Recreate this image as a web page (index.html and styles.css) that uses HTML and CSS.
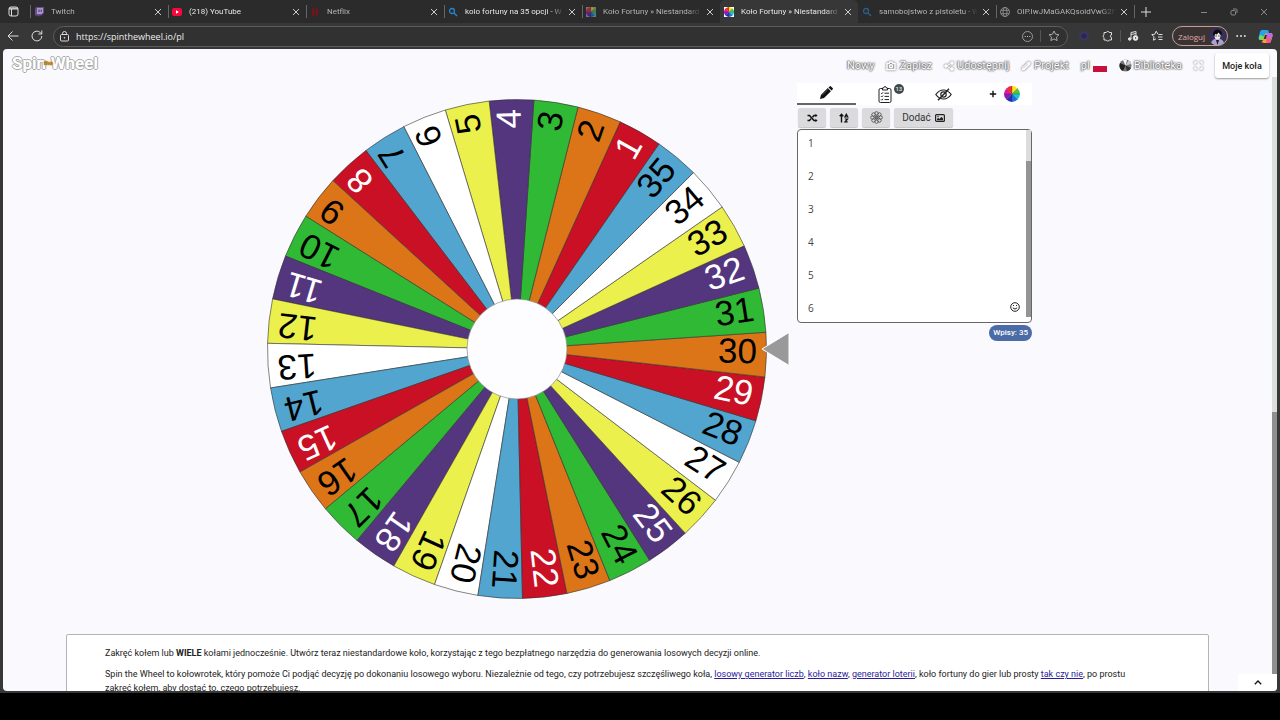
FILE: index.html
```html
<!DOCTYPE html>
<html lang="pl">
<head>
    <meta charset="UTF-8">
    <meta name="viewport" content="width=device-width, initial-scale=1.0">
    <title>Koło Fortuny » Niestandardowe koło</title>
    <link rel="stylesheet" href="styles.css">
</head>
<body>
    <svg width="0" height="0" class="defs">
        <symbol id="x" viewBox="0 0 8 8"><path d="M1 1l6 6M7 1l-6 6" stroke="currentColor" fill="none"/></symbol>
        <symbol id="search" viewBox="0 0 10 10"><circle cx="4" cy="4" r="2.500" fill="none" stroke="currentColor" stroke-width="1.300"/><path d="M6 6l3 3" stroke="currentColor" stroke-width="1.400"/></symbol>
        <symbol id="colorwheel" viewBox="0 0 16 16">
            <path d="M8 8V0A8 8 0 0 1 13.600 2.400z" fill="#ffe11a"/><path d="M8 8L13.600 2.400A8 8 0 0 1 16 8z" fill="#4fc63c"/>
            <path d="M8 8H16A8 8 0 0 1 13.600 13.600z" fill="#17c7d8"/><path d="M8 8L13.600 13.600A8 8 0 0 1 8 16z" fill="#1f6fe0"/>
            <path d="M8 8V16A8 8 0 0 1 2.400 13.600z" fill="#2b2bb8"/><path d="M8 8L2.400 13.600A8 8 0 0 1 0 8z" fill="#8a1bb8"/>
            <path d="M8 8H0A8 8 0 0 1 2.400 2.400z" fill="#e0189a"/><path d="M8 8L2.400 2.400A8 8 0 0 1 8 0z" fill="#f0302a"/>
            <path d="M8 0v16M0 8h16M2.400 2.400l11.200 11.200M13.600 2.400L2.400 13.600" stroke="#333" stroke-width=".3"/>
        </symbol>
    </svg>

    <div class="tabbar">
        <button class="icon-button workspaces" aria-label="Obszary robocze">
            <svg width="11" height="11" viewBox="0 0 11 11" fill="none" stroke="#ddd"><rect x="1" y="1" width="9" height="9" rx="2"/><path d="M1 3h9M1 2.200h9M3.500 3v7"/></svg>
        </button>
        <div class="tab">
            <svg class="favicon" viewBox="0 0 10 10"><path d="M2 0h8v6L7.500 8.500H5.500L4 10V8.500H1V2z" fill="#6b4a9c"/><path d="M3 1h6v4.500L7.500 7H3z" fill="#a89bb8"/><path d="M5 2.500v2.500M7.200 2.500v2.500" stroke="#4b2f80"/></svg>
            <span class="tab-title">Twitch</span><button class="close" aria-label="Zamknij"><svg width="8" height="8"><use href="#x"/></svg></button>
        </div>
        <div class="tab loud">
            <svg class="favicon" viewBox="0 0 10 10"><rect y="1" width="10" height="8" rx="2" fill="#f5083b"/><path d="M4 3.200L7 5 4 6.800z" fill="#fff"/></svg>
            <span class="tab-title">(218) YouTube</span><button class="close" aria-label="Zamknij"><svg width="8" height="8"><use href="#x"/></svg></button>
        </div>
        <div class="tab">
            <svg class="favicon" viewBox="0 0 10 10"><path d="M2 0.500h2l2 5V.5h2v9H6l-2-5v5H2z" fill="#6d1620"/></svg>
            <span class="tab-title">Netflix</span><button class="close" aria-label="Zamknij"><svg width="8" height="8"><use href="#x"/></svg></button>
        </div>
        <div class="tab loud">
            <svg class="favicon blue"><use href="#search"/></svg>
            <span class="tab-title">kolo fortuny na 35 opcji - W</span><button class="close" aria-label="Zamknij"><svg width="8" height="8"><use href="#x"/></svg></button>
        </div>
        <div class="tab">
            <svg class="favicon dim" viewBox="0 0 10 10"><rect width="10" height="10" fill="#aaa"/><use href="#colorwheel" width="10" height="10"/></svg>
            <span class="tab-title">Koło Fortuny » Niestandard</span><button class="close" aria-label="Zamknij"><svg width="8" height="8"><use href="#x"/></svg></button>
        </div>
        <div class="tab active">
            <svg class="favicon" viewBox="0 0 10 10"><rect width="10" height="10" fill="#fff"/><use href="#colorwheel" width="10" height="10"/></svg>
            <span class="tab-title">Koło Fortuny » Niestandard</span><button class="close" aria-label="Zamknij"><svg width="8" height="8"><use href="#x"/></svg></button>
        </div>
        <div class="tab first-after">
            <svg class="favicon blue dim"><use href="#search"/></svg>
            <span class="tab-title">samobojstwo z pistoletu - W</span><button class="close" aria-label="Zamknij"><svg width="8" height="8"><use href="#x"/></svg></button>
        </div>
        <div class="tab">
            <svg class="favicon" viewBox="0 0 10 10" fill="none" stroke="#999" stroke-width=".8"><circle cx="5" cy="5" r="4.500"/><ellipse cx="5" cy="5" rx="2" ry="4.500"/><path d="M1 3.300h8M1 6.700h8"/></svg>
            <span class="tab-title">OIP.IwJMaGAKQsoidVwG2F</span><button class="close" aria-label="Zamknij"><svg width="8" height="8"><use href="#x"/></svg></button>
        </div>
        <button class="icon-button new-tab" aria-label="Nowa karta"><svg width="10" height="10" viewBox="0 0 10 10" stroke="#ddd"><path d="M5 0v10M0 5h10"/></svg></button>
        <div class="window-buttons">
            <button class="icon-button" aria-label="Minimalizuj"><svg width="8" height="8" stroke="#888"><path d="M1 4.500h6"/></svg></button>
            <button class="icon-button" aria-label="Przywróć"><svg width="8" height="8" viewBox="0 0 8 8" fill="none" stroke="#888"><rect x="1" y="2.500" width="4.500" height="4.500" rx="1"/><path d="M3 1h3q1 0 1 1v3"/></svg></button>
            <button class="icon-button" aria-label="Zamknij okno"><svg width="8" height="8" color="#888"><use href="#x"/></svg></button>
        </div>
    </div>

    <div class="toolbar">
        <button class="icon-button" aria-label="Wstecz"><svg width="12" height="12" viewBox="0 0 12 12" fill="none" stroke="#ddd"><path d="M11.500 6H1M5.500 1.500L1 6l4.500 4.500"/></svg></button>
        <button class="icon-button" aria-label="Odśwież"><svg width="12" height="12" viewBox="0 0 12 12" fill="none" stroke="#ddd"><path d="M10.800 6A4.900 4.900 0 1 1 9.200 2.400L10.800 4M10.800 .5V4H7.300"/></svg></button>
        <div class="address">
            <svg width="9" height="11" viewBox="0 0 9 11" fill="none" stroke="#ddd"><rect x=".5" y="3.500" width="8" height="6.500" rx="1"/><path d="M2.500 3.500V2.500a2 2 0 0 1 4 0v1"/><circle cx="4.500" cy="6.800" r=".4" fill="#ddd"/></svg>
            <input type="text" aria-label="Adres" value="https://spinthewheel.io/pl">
            <button class="icon-button" aria-label="Więcej"><svg width="11" height="11" viewBox="0 0 11 11" fill="none" stroke="#999"><circle cx="5.500" cy="5.500" r="5"/><path d="M2.700 5.500h1M5 5.500h1M7.300 5.500h1" stroke="#ccc"/></svg></button>
            <span class="divider"></span>
            <button class="icon-button" aria-label="Ulubione"><svg width="12" height="12" viewBox="0 0 12 12" fill="none" stroke="#aaa"><path d="M6 1l1.500 3.200 3.500.5-2.500 2.400.6 3.500L6 8.900l-3.100 1.700.6-3.500L1 4.700l3.500-.5z"/></svg></button>
        </div>
        <div class="extensions">
            <button class="icon-button" aria-label="Rozszerzenie"><svg width="12" height="12" viewBox="0 0 12 12"><circle cx="6" cy="6" r="5" fill="#3a3660"/><circle cx="6" cy="6" r="2.500" fill="#2a2848"/></svg></button>
            <button class="icon-button" aria-label="Rozszerzenia"><svg width="12" height="12" viewBox="0 0 12 12" fill="none" stroke="#ddd"><path d="M2 2.500h2.300a1.500 1.500 0 0 1 2.900 0H9.500V5a1.200 1.200 0 0 0 0 2.400V10H7.200a1.500 1.500 0 0 1-2.900 0H2V7.500a1.400 1.400 0 0 1 0-2.600z"/></svg></button>
            <span class="divider"></span>
            <button class="icon-button" aria-label="Media"><svg width="12" height="12" viewBox="0 0 12 12" fill="none" stroke="#ddd"><path d="M4 9V2.500L9 1.500V5M4 4.500l5-1"/><circle cx="2.700" cy="9" r="1.300" fill="#ddd"/><circle cx="8.500" cy="8" r="2.400" fill="#eee"/><path d="M8 7l1.500 1L8 9z" fill="#333" stroke="none"/></svg></button>
            <button class="icon-button" aria-label="Lista ulubionych"><svg width="12" height="12" viewBox="0 0 12 12" fill="none" stroke="#ddd"><path d="M7 4.200L5.200 1.200 3.800 4.200.8 4.600 3 6.800l-.5 3.400L5 8.800M7.500 4.500h4M7 7h4.500M7.500 9.500h4"/></svg></button>
        </div>
        <button class="login">Zaloguj
            <svg width="17" height="17" viewBox="0 0 17 17"><circle cx="8.500" cy="8.500" r="8.500" fill="#35305e"/><path d="M2 14.500q2-4 6.500-4t6.500 4a8.500 8.500 0 0 1-13 0" fill="#a7a2ce"/><ellipse cx="8.500" cy="7.500" rx="3" ry="4" fill="#f2e9e6"/><path d="M4 7q0-5.500 4.500-5.500T13 7l-2-.5-1.500-2L8 6.500 6 6l-.5 2z" fill="#0d0c14"/><path d="M6.500 8h1.200M9.300 8h1.200" stroke="#222"/><path d="M7 12l1.500 5L10 12z" fill="#1b1a28"/></svg>
        </button>
        <button class="icon-button" aria-label="Ustawienia"><svg width="10" height="4" viewBox="0 0 10 4" fill="#ddd"><circle cx="1.200" cy="2" r="1"/><circle cx="5" cy="2" r="1"/><circle cx="8.800" cy="2" r="1"/></svg></button>
        <button class="icon-button" aria-label="Copilot"><svg width="15" height="15" viewBox="0 0 15 15"><path d="M4 1h5q1.500 0 2 2l-2 6q-.5 2-2.500 2H2.500Q0 11 .7 8L2 3q.5-2 2-2z" fill="#25a5e8"/><path d="M2 6l-1 3q-.5 2 1.500 2h4l1-3z" fill="#7ed957"/><path d="M6 14h5q1.500 0 2-2l1.500-5Q15 4 12.500 4H9q-2 0-2.500 2L5 11q-.5 2-2 2z" fill="#f2a03d"/><path d="M9 4h3.500Q15 4 14.500 7l-1 3L8 8z" fill="#c06ae8"/><path d="M8 8l5.500 2-.5 2q-.5 2-2 2H8.500z" fill="#f2568a"/><path d="M7 6l2 0-1.200 4H5.700z" fill="#333"/></svg></button>
    </div>

    <div class="page">
        <header class="header">
            <a class="logo" href="#">Spin<small>the</small>Wheel</a>
            <nav class="nav">
                <a href="#">Nowy</a>
                <a href="#"><svg width="10" height="10" viewBox="0 0 10 10" fill="none" stroke="#fff" stroke-width="1.400"><path d="M1 2.500h2L4 1h2l1 1.500h2v6H1z"/><circle cx="5" cy="5.300" r="1.500"/></svg>Zapisz</a>
                <a href="#"><svg width="10" height="10" viewBox="0 0 10 10" fill="#fff" stroke="#fff"><path d="M8 2L2 5l6 3" fill="none"/><circle cx="8" cy="2" r="1.300"/><circle cx="2" cy="5" r="1.300"/><circle cx="8" cy="8" r="1.300"/></svg>Udostępnij</a>
                <a href="#"><svg width="10" height="10" viewBox="0 0 10 10"><path d="M.5 9.500l.7-3L7 .8Q8 .2 9 1.200t.3 2L3.500 8.900z" fill="#fff"/><path d="M2 7.500l5-5" stroke="#999" stroke-width=".6"/></svg>Projekt</a>
                <a href="#" class="lang">pl<span class="flag"></span></a>
                <a href="#" class="library"><svg width="13" height="13" viewBox="0 0 13 13"><circle cx="6.500" cy="6.500" r="6" fill="#777"/><path d="M6.500 6.500L1 4A6 6 0 0 0 4 12z" fill="#222"/><path d="M6.500 6.500L4 1A6 6 0 0 1 8 .7z" fill="#fff"/><path d="M6.500 6.500l3-5.200A6 6 0 0 1 12.200 5z" fill="#ccc"/><path d="M6.500 6.500L12 9A6 6 0 0 1 8 12.300z" fill="#333"/></svg>Biblioteka</a>
                <a href="#" aria-label="Pełny ekran"><svg width="9" height="9" viewBox="0 0 9 9" fill="none" stroke="#fff" stroke-width="1.500"><path d="M1 3V1h2M6 1h2v2M8 6v2H6M3 8H1V6"/></svg></a>
                <button class="my-wheels">Moje koła</button>
            </nav>
        </header>

        <main class="main">
            <svg class="wheel" viewBox="0 0 523 502" role="img" aria-label="Koło fortuny">
                <g id="slices"></g>
                <circle class="hub" cx="250" cy="251" r="50"/>
                <path class="pointer" d="M495 251L522 234.500V267.500z"/>
            </svg>

            <section class="panel">
                <div class="panel-tabs">
                    <button class="panel-tab selected" aria-label="Edytuj"><svg width="14" height="14" viewBox="0 0 14 14"><path d="M1 13l.9-4L8.800 2.100l3.100 3.100L5 12.100zM9.500 1.400L10.600.4q.7-.6 1.400 0L13.600 2q.6.700 0 1.400L12.600 4.500z" fill="#111"/><path d="M3.200 9.300l6-6" stroke="#777" stroke-width=".6"/></svg></button>
                    <button class="panel-tab" aria-label="Wyniki">
                        <svg width="14" height="17" viewBox="0 0 14 17" fill="none" stroke="#222"><rect x="1" y="2.500" width="12" height="14" rx="1.500"/><path d="M4.500 4V2Q5 2 5.500 2 6 .5 7 .5T8.500 2h1v2z" fill="#fff"/><path d="M3 7l.8.800L5 6.300M3 10.200l.8.800L5 9.500M3 13.400l.8.800L5 12.700M6.500 7.200H11M6.500 10.400H11M6.500 13.600H11"/></svg>
                        <span class="count">13</span>
                    </button>
                    <button class="panel-tab" aria-label="Ukryj"><svg width="17" height="13" viewBox="0 0 17 13" fill="none" stroke="#222" stroke-width="1.200"><path d="M.8 6.500Q4 2 8.500 2t7.700 4.500Q13 11 8.500 11T.8 6.500z"/><circle cx="8.500" cy="6.500" r="2.700"/><path d="M3 12.300L14 .7" stroke-width="1.500"/></svg></button>
                    <button class="panel-tab add" aria-label="Dodaj koło"><svg width="8" height="8" viewBox="0 0 8 8" stroke="#111" stroke-width="1.400"><path d="M4 .8v6.400M.8 4h6.400"/></svg><svg width="16" height="16"><use href="#colorwheel"/></svg></button>
                </div>
                <div class="actions">
                    <button class="action" aria-label="Losowo"><svg width="11" height="10" viewBox="0 0 11 10" fill="none" stroke="#111" stroke-width="1.500"><path d="M.5 2.500h2l4.500 5h2M.5 7.500h2L4 5.800M5.500 4.200L7 2.500h2"/><path d="M8.500.8l2 1.700-2 1.700zM8.500 5.800l2 1.700-2 1.700z" fill="#111" stroke="none"/></svg></button>
                    <button class="action" aria-label="Sortuj"><svg width="10" height="10" viewBox="0 0 10 10" fill="none" stroke="#111" stroke-width="1.400"><path d="M2.500 9.500V1.500M.7 3.300l1.800-2 1.800 2"/><path d="M5.800 4L7.300 1.200 8.800 4zM5.800 6h2.700L6 8.800h2.700" stroke-width="1.200"/></svg></button>
                    <button class="action" aria-label="Ustawienia"><svg width="13" height="13" viewBox="0 0 13 13" fill="none" stroke="#555" stroke-width=".9"><g id="petals"><circle cx="6.500" cy="2.300" r="1.700"/><circle cx="6.500" cy="10.700" r="1.700"/><circle cx="2.300" cy="6.500" r="1.700"/><circle cx="10.700" cy="6.500" r="1.700"/></g><use href="#petals" transform="rotate(45 6.500 6.500)"/><circle cx="6.500" cy="6.500" r="1.800" fill="#777"/></svg></button>
                    <button class="action wide">Dodać <svg width="10" height="8" viewBox="0 0 10 8"><rect x=".6" y=".6" width="8.800" height="6.800" rx="1" fill="none" stroke="#222" stroke-width="1.200"/><path d="M2 6.200V5l1.300-1.200L4.500 5l2-2.300L8 4.500v1.700z" fill="#222"/><circle cx="3" cy="2.500" r=".7" fill="#222"/></svg></button>
                </div>
                <div class="entries">
                    <textarea aria-label="Wpisy" id="entries"></textarea>
                    <span class="entries-scroll"></span>
                    <button class="icon-button smile" aria-label="Emoji"><svg width="10" height="10" viewBox="0 0 10 10" fill="none" stroke="#222"><circle cx="5" cy="5" r="4.300"/><path d="M2.800 5.800q2.200 2.600 4.400 0M3.500 3v1M6.500 3v1"/></svg></button>
                </div>
                <span class="badge">Wpisy: 35</span>
            </section>
        </main>

        <article class="about">
            <p>Zakręć kołem lub <b>WIELE</b> kołami jednocześnie. Utwórz teraz niestandardowe koło, korzystając z tego bezpłatnego narzędzia do generowania losowych decyzji online.</p>
            <p>Spin the Wheel to kołowrotek, który pomoże Ci podjąć decyzję po dokonaniu losowego wyboru. Niezależnie od tego, czy potrzebujesz szczęśliwego koła, <a href="#">losowy generator liczb</a>, <a href="#">koło nazw</a>, <a href="#">generator loterii</a>, koło fortuny do gier lub prosty <a href="#">tak czy nie</a>, po prostu zakręć kołem, aby dostać to, czego potrzebujesz.</p>
        </article>

        <div class="page-scroll"></div>
        <button class="to-top" aria-label="Do góry"><svg width="8" height="5" viewBox="0 0 8 5" fill="none" stroke="#111" stroke-width="1.300"><path d="M.8 4.300L4 1l3.200 3.300"/></svg></button>
    </div>
    <div class="taskbar"></div>
    <script src="script.js"></script>
</body>
</html>
```

FILE: styles.css
```css
* {
    box-sizing: border-box;
}
body {
    margin: 0;
    height: 100vh;
    display: flex;
    flex-direction: column;
    overflow: hidden;
    background: #373737;
    font-family: Roboto, "Liberation Sans", sans-serif;
    color: #222;
}
button {
    font-family: inherit;
    border: none;
    padding: 0;
    cursor: pointer;
}
svg {
    display: block;
    flex: none;
}
.defs {
    position: absolute;
}
.icon-button,
.close {
    display: flex;
    align-items: center;
    justify-content: center;
    background: none;
    color: #ccc;
}

/* browser tabs */
.tabbar {
    display: flex;
    flex: none;
    height: 23px;
    background: #2b2b2b;
}
.workspaces {
    width: 26px;
    margin-right: 4px;
}
.tab {
    display: flex;
    align-items: center;
    width: 138px;
    padding: 0 6px 0 4px;
    background: linear-gradient(#666, #666) left center / 1px 13px no-repeat;
    color: #b4b4b4;
}
.tab.loud {
    color: #e6e6e6;
}
.tab.active {
    background: #373737;
    border-radius: 5px 5px 0 0;
    color: #e6e6e6;
}
.tab.first-after {
    background: none;
}
.favicon {
    width: 10px;
    height: 10px;
    margin-right: 7px;
}
.blue {
    color: #2583cf;
}
.dim {
    opacity: 0.6;
}
.tab-title {
    flex: 1;
    overflow: hidden;
    white-space: nowrap;
    font-size: 8px;
    line-height: 12px;
    mask-image: linear-gradient(to right, #000 85%, transparent);
}
.close {
    width: 8px;
    margin-left: 4px;
}
.new-tab {
    width: 24px;
    background: linear-gradient(#666, #666) left center / 1px 13px no-repeat;
}
.window-buttons {
    display: flex;
    gap: 22px;
    margin-left: auto;
    padding-right: 12px;
}

/* address row */
.toolbar {
    display: flex;
    align-items: center;
    flex: none;
    height: 26px;
    padding: 0 7px;
    gap: 12px;
    background: #373737;
    font-family: "Open Sans", "Noto Sans", sans-serif;
}
.address {
    display: flex;
    align-items: center;
    flex: 1;
    gap: 7px;
    height: 21px;
    margin: 0 -8px 0 -2px;
    padding: 0 7px 0 6px;
    background: #313131;
    border: 1px solid #5c5c5c;
    border-radius: 11px;
}
.address input {
    flex: 1;
    min-width: 0;
    padding: 0;
    border: none;
    outline: none;
    background: none;
    color: #eee;
    font-family: inherit;
    font-size: 9px;
}
.divider {
    width: 1px;
    height: 12px;
    background: #555;
}
.extensions {
    display: flex;
    align-items: center;
}
.extensions .icon-button {
    width: 24px;
}
.login {
    display: flex;
    align-items: center;
    gap: 4px;
    height: 20px;
    margin: 0 -4px 0 -9px;
    padding: 0 1px 0 5px;
    background: #3a3333;
    border: 1px solid #c99a9a;
    border-radius: 10px;
    color: #e0a9a9;
    font-size: 8px;
}

/* page */
.page {
    position: relative;
    flex: 1;
    min-height: 0;
    margin: 0 3px;
    overflow: hidden;
    background: #faf9fe;
    border-radius: 4px;
}
.header {
    display: flex;
    align-items: flex-start;
    justify-content: space-between;
    height: 34px;
    padding: 4px 8px 0 9px;
}
.logo {
    display: flex;
    align-items: center;
    color: #fff;
    font-size: 17px;
    font-weight: 700;
    line-height: 20px;
    text-decoration: none;
    text-shadow: -1px 0 #aaa, 1px 0 #aaa, 0 -1px #aaa, 0 1px #aaa;
}
.logo small {
    margin: 0 -2px;
    color: #d9930a;
    font-size: 6px;
    line-height: 8px;
    text-shadow: 0 0 1px #333, 0 0 2px #d9930a;
    z-index: 1;
}
.nav {
    display: flex;
    align-items: center;
    gap: 12px;
    height: 25px;
}
.nav a {
    display: flex;
    align-items: center;
    gap: 3px;
    color: #fff;
    font-size: 11px;
    text-decoration: none;
    text-shadow: 0 0 2px #555, 0 0 2px #555, 0 0 1px #666;
}
.nav svg {
    filter: drop-shadow(0 0 1px #555);
}
.nav .library {
    gap: 2px;
}
.nav .library svg {
    filter: none;
}
.flag {
    width: 14px;
    height: 8px;
    margin-top: 4px;
    background: linear-gradient(#fff 25%, #c8103e 25%);
}
.my-wheels {
    width: 54px;
    height: 25px;
    background: #fff;
    border-radius: 3px;
    box-shadow: 0 1px 2px #999;
    color: #222;
    font-size: 9px;
    font-weight: 500;
}
.main {
    display: flex;
    justify-content: center;
    align-items: flex-start;
    gap: 7px;
    padding: 0 5px 0 24px;
}
.wheel {
    width: 523px;
    margin-top: 15px;
}
.slice {
    stroke: #333;
    stroke-width: 0.6px;
}
.number {
    font-family: "Liberation Sans", Arial, sans-serif;
    font-size: 35px;
    text-anchor: end;
}
.hub {
    fill: #fdfdff;
    stroke: #777;
    stroke-width: 0.6px;
}
.pointer {
    fill: #999;
    stroke: #fff;
}

/* entries panel */
.panel {
    display: flex;
    flex-direction: column;
    width: 235px;
}
.panel-tabs {
    display: grid;
    grid-template-columns: repeat(4, 1fr);
    height: 22px;
    background: #fff;
}
.panel-tab {
    position: relative;
    display: flex;
    align-items: center;
    justify-content: center;
    background: none;
}
.panel-tab.selected {
    border-bottom: 2px solid #666;
}
.panel-tab.add {
    gap: 7px;
    padding-left: 3px;
}
.count {
    position: absolute;
    top: 1px;
    left: 38px;
    width: 10px;
    height: 10px;
    border-radius: 5px;
    background: #3d4a4c;
    color: #fff;
    font-size: 6px;
    line-height: 10px;
}
.actions {
    display: flex;
    gap: 4px;
    padding: 3px 0 2px 1px;
}
.action {
    display: flex;
    align-items: center;
    justify-content: center;
    gap: 4px;
    width: 28px;
    height: 19px;
    background: #dbdbde;
    border-radius: 2px;
    box-shadow: 0 1px 1px #c4c4c8;
    color: #333;
    font-size: 10px;
}
.action.wide {
    width: 59px;
}
.entries {
    position: relative;
}
.entries textarea {
    display: block;
    width: 100%;
    height: 194px;
    padding: 0 10px;
    overflow: hidden;
    border: 1px solid #666;
    border-radius: 4px;
    background: #fff;
    outline: none;
    resize: none;
    color: #444;
    font-family: "Open Sans", "Noto Sans", sans-serif;
    font-size: 10px;
    line-height: 33px;
}
.entries-scroll {
    position: absolute;
    top: 1px;
    right: 1px;
    bottom: 6px;
    width: 5px;
    background: linear-gradient(#dcdcdc 31px, #949494 31px);
}
.smile {
    position: absolute;
    right: 12px;
    bottom: 11px;
}
.badge {
    align-self: flex-end;
    margin-top: 2px;
    padding: 0 4px;
    border-radius: 8px;
    background: #4a6ba5;
    color: #fff;
    font-size: 8px;
    font-weight: 500;
    line-height: 16px;
}

/* description */
.about {
    margin: 34px 68px 0 63px;
    padding: 11px 68px 0 38px;
    background: #fff;
    border: 1px solid #b4b4b8;
    border-radius: 2px;
    font-size: 9px;
    line-height: 14px;
}
.about p {
    margin: 0 0 7px;
}
.about a {
    color: #2a1c9c;
}
.page-scroll {
    position: absolute;
    top: 28px;
    right: 0;
    bottom: 0;
    width: 5px;
    background: linear-gradient(#dcdedc 335px, #8f8f8f 335px);
}
.to-top {
    position: absolute;
    right: 0;
    bottom: 0;
    display: flex;
    align-items: center;
    justify-content: center;
    width: 39px;
    height: 17px;
    background: #fff;
}
.taskbar {
    flex: none;
    height: 29px;
    background: #000;
    border-top: 2px solid #373737;
}
```

FILE: script.js
```js
const COUNT = 35;
const STEP = 360 / COUNT;
const CX = 250;
const CY = 251;
const RADIUS = 249.5;
const COLORS = ['#c91024', '#dc7517', '#30b934', '#54367f', '#ebf04c', '#ffffff', '#51a5cf'];
const LIGHT_TEXT = ['#c91024', '#54367f'];

// angle of the middle of entry 30, next to the pointer
const OFFSET = 1.3;

function point(angle) {
    const rad = angle * Math.PI / 180;
    return (CX + RADIUS * Math.cos(rad)) + ' ' + (CY + RADIUS * Math.sin(rad));
}

let slices = '';
const entries = [];
for (let n = 1; n <= COUNT; n++) {
    const angle = OFFSET + (30 - n) * STEP;
    const color = COLORS[(n - 1) % COLORS.length];
    const textColor = LIGHT_TEXT.includes(color) ? '#fff' : '#000';
    slices += `<path class="slice" fill="${color}" d="M${CX} ${CY}L${point(angle - STEP / 2)}A${RADIUS} ${RADIUS} 0 0 1 ${point(angle + STEP / 2)}z"/>`;
    slices += `<text class="number" fill="${textColor}" x="${CX + 240}" y="${CY + 9}" transform="rotate(${angle} ${CX} ${CY})">${n}</text>`;
    entries.push(n);
}
document.getElementById('slices').innerHTML = slices;

const textarea = document.getElementById('entries');
textarea.value = entries.join('\n');
textarea.scrollTop = 3;
```
